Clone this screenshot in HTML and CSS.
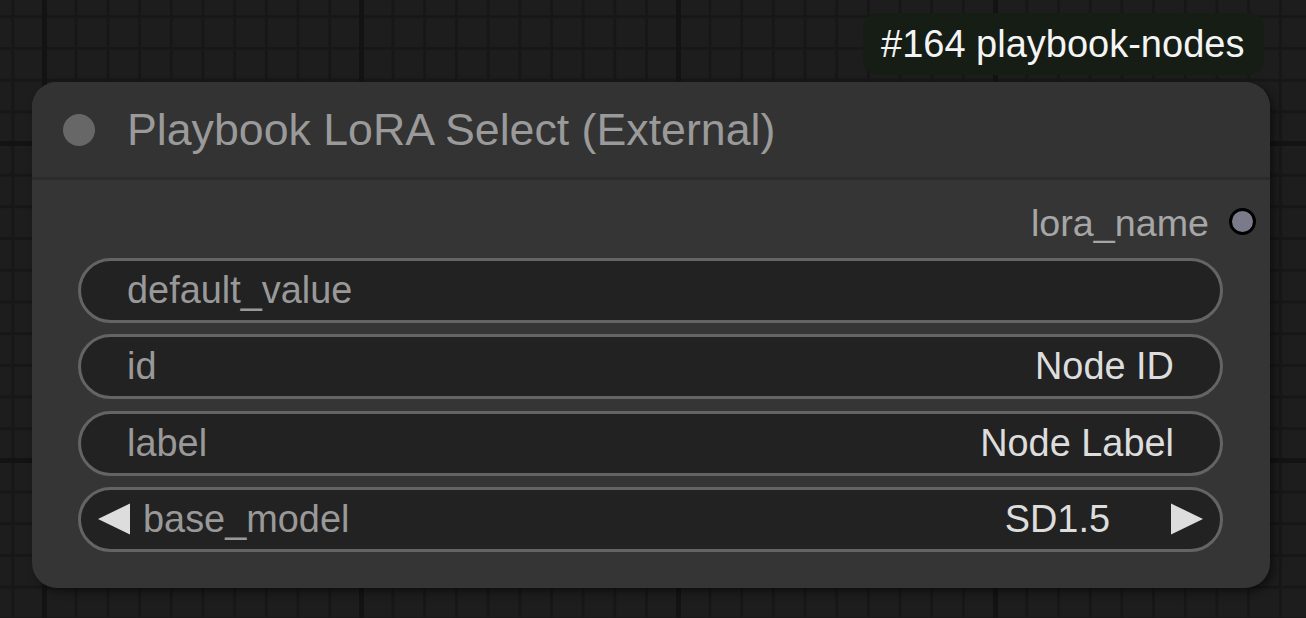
FILE: index.html
```html
<!DOCTYPE html>
<html lang="en">
<head>
<meta charset="utf-8">
<title>Playbook LoRA Select (External)</title>
<link rel="stylesheet" href="styles.css">
</head>
<body>
<main class="canvas">
  <div class="badge">#164 playbook-nodes</div>
  <section class="node">
    <header class="node-title">
      <span class="title-dot"></span>
      <span class="title-text">Playbook LoRA Select (External)</span>
    </header>
    <div class="node-body">
      <div class="output-row">
        <span class="output-label">lora_name</span>
        <span class="slot-dot"></span>
      </div>
      <div class="widgets">
        <div class="widget">
          <span class="w-label">default_value</span>
        </div>
        <div class="widget">
          <span class="w-label">id</span>
          <span class="w-value">Node ID</span>
        </div>
        <div class="widget">
          <span class="w-label">label</span>
          <span class="w-value">Node Label</span>
        </div>
        <div class="widget combo">
          <svg class="arrow" width="32" height="32" viewBox="0 0 32 32"><polygon points="32,0.5 32,31.5 0,16" fill="#dddddd"/></svg>
          <span class="w-label">base_model</span>
          <span class="w-value">SD1.5</span>
          <svg class="arrow right" width="32" height="32" viewBox="0 0 32 32"><polygon points="0,0.5 0,31.5 32,16" fill="#dddddd"/></svg>
        </div>
      </div>
    </div>
  </section>
</main>
</body>
</html>
```

FILE: styles.css
```css
html, body {
  margin: 0;
  padding: 0;
}

body {
  width: 1306px;
  height: 618px;
  overflow: hidden;
  font-family: "Liberation Sans", Arial, Helvetica, sans-serif;
  background-color: #1d1d1d;
  background-image:
    linear-gradient(to right, #131313 5px, transparent 5px),
    linear-gradient(to bottom, #131313 5px, transparent 5px),
    linear-gradient(to right, #171717 3px, transparent 3px),
    linear-gradient(to bottom, #171717 3px, transparent 3px);
  background-size: 317px 317px, 317px 317px, 31.7px 31.7px, 31.7px 31.7px;
  background-position: 42px 141px, 42px 141px, 43px 142px, 43px 142px;
}

.canvas {
  position: relative;
  width: 1306px;
  height: 618px;
}

.badge {
  position: absolute;
  left: 863px;
  top: 13px;
  width: 401px;
  height: 62px;
  box-sizing: border-box;
  padding-left: 18px;
  display: flex;
  align-items: center;
  background: #151d14;
  border-radius: 15px;
  color: #f4f4f4;
  font-size: 38px;
  white-space: nowrap;
}

.node {
  position: absolute;
  left: 32px;
  top: 82px;
  width: 1238px;
  height: 506px;
  background: #353535;
  border-radius: 25px;
  box-shadow: 4px 4px 8px rgba(0, 0, 0, 0.45);
  display: flex;
  flex-direction: column;
  overflow: hidden;
}

.node-title {
  height: 95px;
  flex: none;
  display: flex;
  align-items: center;
  background: #333333;
  border-bottom: 3px solid #2b2b2b;
  padding-left: 31px;
}

.title-dot {
  width: 32px;
  height: 32px;
  border-radius: 50%;
  background: #676767;
  flex: none;
  margin-top: 1px;
}

.title-text {
  margin-left: 32px;
  font-size: 44.7px;
  color: #9a9a9a;
  white-space: nowrap;
}

.node-body {
  display: flex;
  flex-direction: column;
  padding: 0 14px 35px 46px;
}

.output-row {
  height: 78px;
  box-sizing: border-box;
  padding-top: 4px;
  display: flex;
  justify-content: flex-end;
  align-items: center;
}

.output-label {
  font-size: 37.7px;
  color: #a6a6a6;
  margin-top: 5px;
  margin-right: 20px;
}

.slot-dot {
  width: 21px;
  height: 21px;
  border-radius: 50%;
  background: #7a7a8b;
  border: 3px solid #000000;
  flex: none;
}

.widgets {
  display: flex;
  flex-direction: column;
  gap: 11.33px;
  margin-right: 33px;
}

.widget {
  height: 65px;
  box-sizing: border-box;
  border: 3px solid #646464;
  border-radius: 33px;
  background: #222222;
  display: flex;
  align-items: center;
  padding: 0 46px;
  font-size: 37.9px;
}

.w-label {
  color: #999999;
  white-space: nowrap;
}

.w-value {
  margin-left: auto;
  color: #dddddd;
  white-space: nowrap;
}

.widget.combo {
  padding: 0 17px;
}

.widget.combo .w-label {
  margin-left: 13px;
}

.widget.combo .w-value {
  margin-right: 61px;
}

.arrow {
  flex: none;
  display: block;
}
```
